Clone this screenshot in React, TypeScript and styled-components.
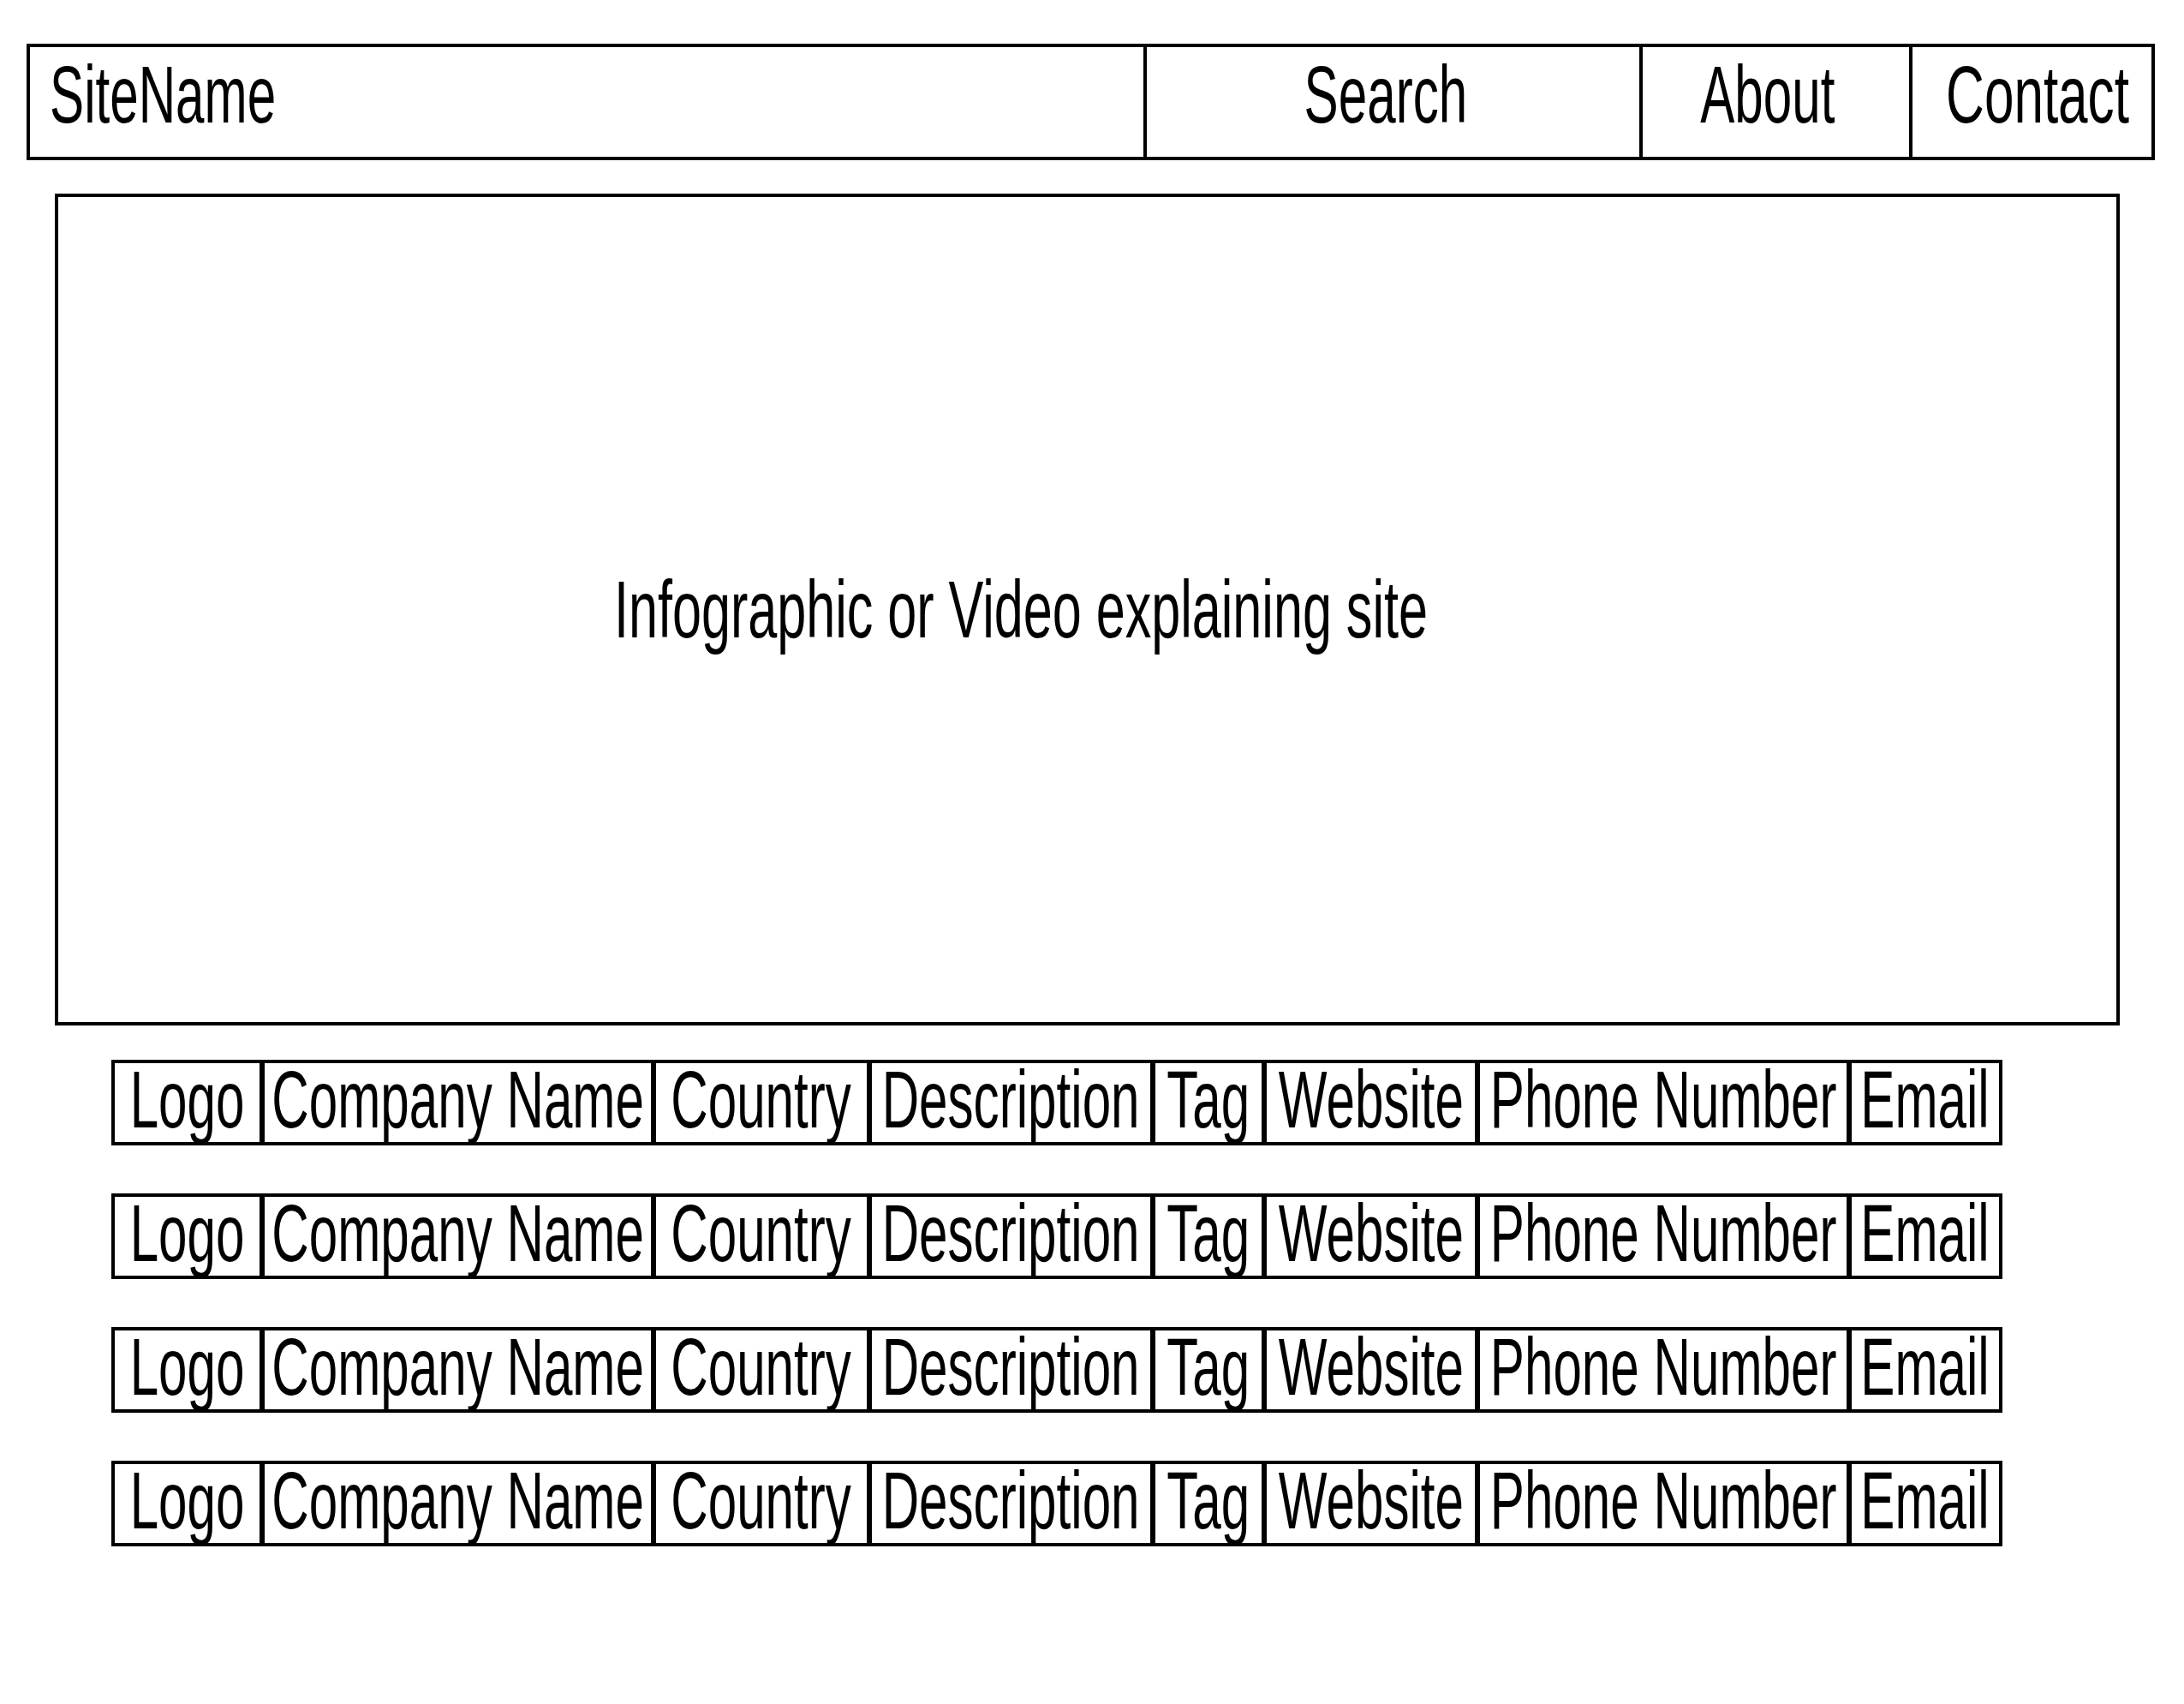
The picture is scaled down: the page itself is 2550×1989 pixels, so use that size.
import React from "react";
import styled, { createGlobalStyle } from "styled-components";

const GlobalStyle = createGlobalStyle`
  html, body {
    margin: 0;
    padding: 0;
    background: #ffffff;
  }
  body {
    font-family: "Liberation Sans", Arial, sans-serif;
    color: #000000;
  }
`;

const Page = styled.div`
  display: flex;
  flex-direction: column;
  align-items: flex-start;
  padding-top: 51px;
  padding-bottom: 120px;
`;

const Header = styled.header`
  margin-left: 31px;
  width: 2485px;
  height: 136px;
  box-sizing: border-box;
  border: 2px solid #000;
  display: flex;
`;

const NavCell = styled.div<{ $w: number; $left?: boolean; $shift?: number }>`
  width: ${(p) => p.$w}px;
  flex-shrink: 0;
  box-sizing: border-box;
  border: 2px solid #000;
  display: flex;
  align-items: center;
  justify-content: ${(p) => (p.$left ? "flex-start" : "center")};
  padding-left: ${(p) => (p.$left ? 23 : Math.max(0, p.$shift ?? 0) * 2)}px;
  padding-right: ${(p) => Math.max(0, -(p.$shift ?? 0)) * 2}px;
  padding-bottom: 16px;
`;

const Label = styled.span<{ $left?: boolean; $sx?: number }>`
  display: inline-block;
  flex-shrink: 0;
  font-size: 94px;
  line-height: 94px;
  font-weight: 400;
  white-space: nowrap;
  transform: scaleX(${(p) => p.$sx ?? 0.64});
  transform-origin: ${(p) => (p.$left ? "left center" : "center center")};
`;

const Hero = styled.section`
  margin-top: 39px;
  margin-left: 64px;
  width: 2411px;
  height: 971px;
  box-sizing: border-box;
  border: 4px solid #000;
  display: flex;
  align-items: center;
  padding-left: 649px;
`;

const List = styled.div`
  margin-top: 40px;
  margin-left: 130px;
  display: flex;
  flex-direction: column;
  gap: 56px;
`;

const Row = styled.div`
  display: grid;
  grid-template-columns: 175px 457px 252px 331px 130px 249px 434px 178px;
  grid-template-rows: minmax(0, 1fr);
  width: 2208px;
  height: 100px;
  box-sizing: border-box;
  border: 1px solid #000;
`;

const Cell = styled.div`
  box-sizing: border-box;
  border: 3px solid #000;
  display: flex;
  align-items: center;
  justify-content: center;
  padding-bottom: 6px;
  min-width: 0;
  min-height: 0;
  overflow: visible;
`;

const fields = [
  "Logo",
  "Company Name",
  "Country",
  "Description",
  "Tag",
  "Website",
  "Phone Number",
  "Email",
];

const nav = [
  { label: "Search", w: 579, shift: -9, sx: 0.64 },
  { label: "About", w: 315, shift: -10, sx: 0.64 },
  { label: "Contact", w: 283, shift: 6, sx: 0.66 },
];

export default function App() {
  return (
    <>
      <GlobalStyle />
      <Page>
        <Header>
          <NavCell $w={1304} $left>
            <Label $left>SiteName</Label>
          </NavCell>
          {nav.map((n) => (
            <NavCell key={n.label} $w={n.w} $shift={n.shift}>
              <Label $sx={n.sx}>{n.label}</Label>
            </NavCell>
          ))}
        </Header>
        <Hero>
          <Label $left $sx={0.65}>
            Infographic or Video explaining site
          </Label>
        </Hero>
        <List>
          {[0, 1, 2, 3].map((r) => (
            <Row key={r}>
              {fields.map((f) => (
                <Cell key={f}>
                  <Label>{f}</Label>
                </Cell>
              ))}
            </Row>
          ))}
        </List>
      </Page>
    </>
  );
}
